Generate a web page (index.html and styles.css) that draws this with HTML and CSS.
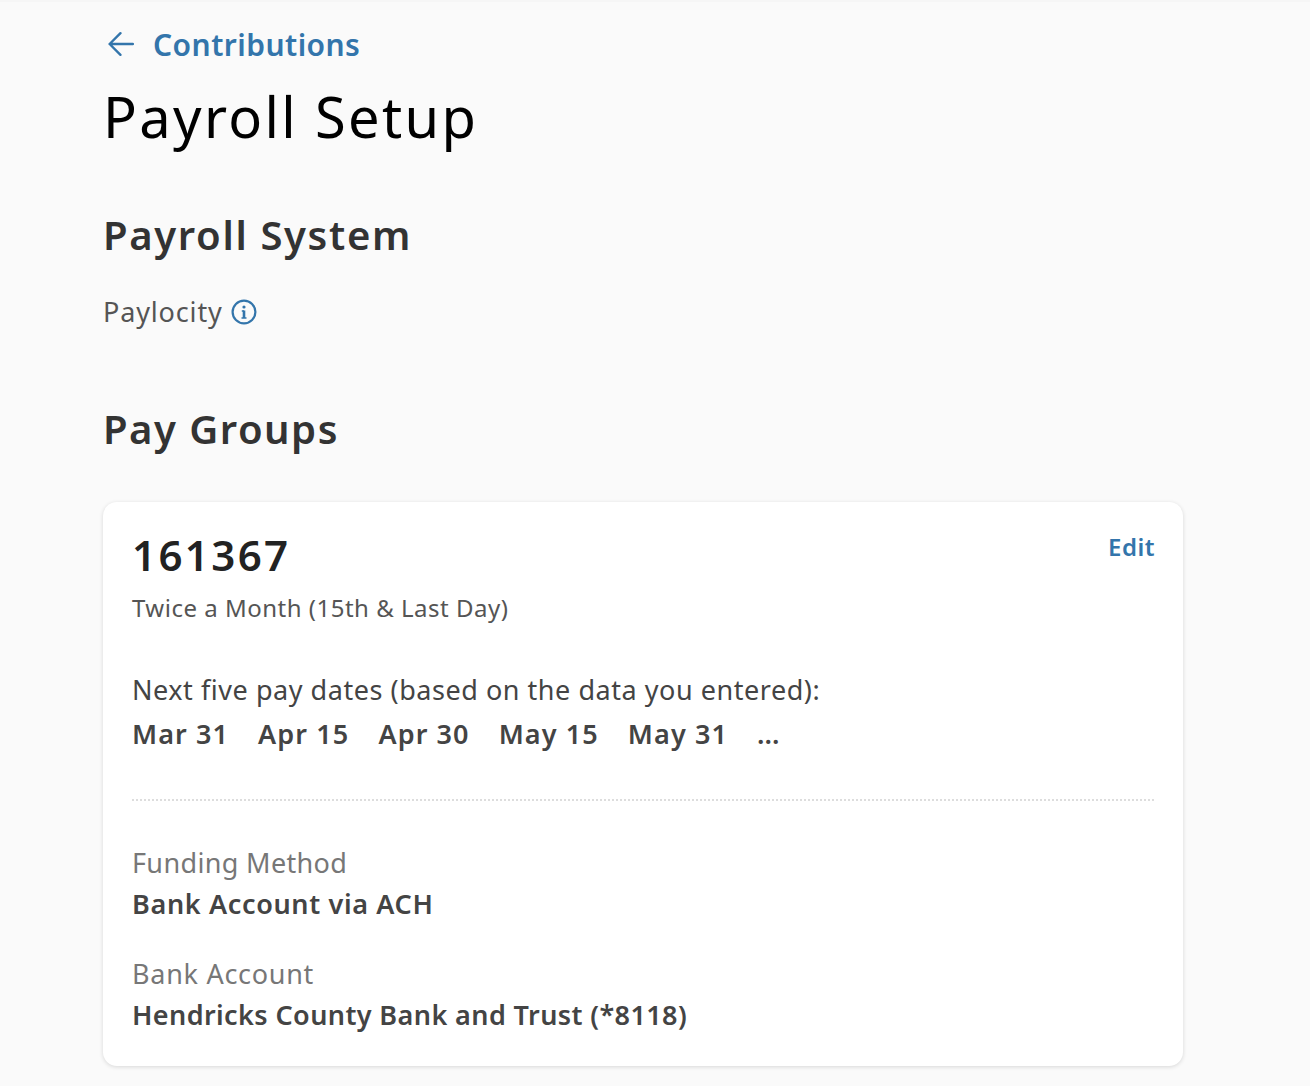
FILE: index.html
```html
<!DOCTYPE html>
<html lang="en">
<head>
    <meta charset="UTF-8">
    <meta name="viewport" content="width=device-width, initial-scale=1.0">
    <title>Payroll Setup</title>
    <link rel="stylesheet" href="styles.css">
</head>
<body>
    <div class="page">
        <a class="back-link" href="#">
            <svg class="back-icon" viewBox="0 0 24 24" width="24" height="24" fill="none" stroke="currentColor" stroke-width="2.2" stroke-linecap="round" stroke-linejoin="round">
                <path d="M23 12H1.5M11.5 2 1.5 12l10 10"/>
            </svg>
            <span>Contributions</span>
        </a>
        <h1 class="page-title">Payroll Setup</h1>

        <h2 class="section-title system-title">Payroll System</h2>
        <div class="system-name">
            <span>Paylocity</span>
            <svg class="info-icon" viewBox="0 0 26 26" width="26" height="26" fill="none">
                <circle cx="13" cy="13" r="11.4" stroke="currentColor" stroke-width="2.2"/>
                <circle cx="13" cy="8" r="1.6" fill="currentColor"/>
                <path d="M13 11.5v7.5" stroke="currentColor" stroke-width="2.6"/>
                <path d="M10.8 12h2.2M10.5 19h5" stroke="currentColor" stroke-width="1.4"/>
            </svg>
        </div>

        <h2 class="section-title groups-title">Pay Groups</h2>

        <div class="card">
            <div class="card-head">
                <div class="group-id">161367</div>
                <a class="edit-link" href="#">Edit</a>
            </div>
            <div class="group-schedule">Twice a Month (15th &amp; Last Day)</div>

            <div class="dates-label">Next five pay dates (based on the data you entered):</div>
            <div class="dates">
                <span>Mar 31</span>
                <span>Apr 15</span>
                <span>Apr 30</span>
                <span>May 15</span>
                <span>May 31</span>
                <span class="dates-more">...</span>
            </div>

            <div class="divider"></div>

            <div class="field">
                <div class="field-label">Funding Method</div>
                <div class="field-value">Bank Account via ACH</div>
            </div>
            <div class="field">
                <div class="field-label bank-label">Bank Account</div>
                <div class="field-value bank-value">Hendricks County Bank and Trust (*8118)</div>
            </div>
        </div>
    </div>
</body>
</html>
```

FILE: styles.css
```css
* { margin: 0; padding: 0; box-sizing: border-box; }
body {
    font-family: "Noto Sans", "Lato", sans-serif;
    background: #fafafa;
    color: #333;
    min-height: 100vh;
    overflow: hidden;
}
.page {
    padding: 23px 127px 0 103px;
    border-top: 2px solid #f6f6f6;
}
.back-link {
    display: flex;
    align-items: center;
    gap: 19px;
    height: 38px;
    padding-left: 5px;
    color: #3375ab;
    font-size: 30px;
    font-weight: 600;
    letter-spacing: 0.45px;
    text-decoration: none;
}
.back-icon {
    width: 26px;
    height: 26px;
    flex-shrink: 0;
}
.page-title {
    margin-top: 18px;
    color: #000;
    font-size: 56px;
    font-weight: 400;
    line-height: 70px;
    letter-spacing: 2.35px;
}
.section-title {
    margin-top: 58px;
    color: #333;
    font-size: 40px;
    font-weight: 600;
    line-height: 52px;
}
.system-title { letter-spacing: 1.65px; }
.system-name {
    display: flex;
    align-items: center;
    gap: 8px;
    margin-top: 32px;
    color: #555;
    font-size: 27px;
    line-height: 38px;
    letter-spacing: 0.85px;
}
.info-icon { color: #3375ab; }
.groups-title {
    margin-top: 72px;
    letter-spacing: 1.5px;
}
.card {
    margin-top: 47px;
    padding: 29px 28px 32px 29px;
    background: #fff;
    border-radius: 14px;
    box-shadow: 0 1px 4px rgba(0, 0, 0, 0.14);
}
.card-head {
    display: flex;
    justify-content: space-between;
    align-items: flex-start;
}
.group-id {
    color: #222;
    font-size: 42px;
    font-weight: 600;
    line-height: 48px;
    letter-spacing: 2.4px;
}
.edit-link {
    margin-top: -1px;
    color: #3375ab;
    font-size: 24px;
    font-weight: 600;
    letter-spacing: 0.5px;
    text-decoration: none;
}
.group-schedule {
    margin-top: 12px;
    color: #555;
    font-size: 24px;
    line-height: 34px;
    letter-spacing: 0.5px;
}
.dates-label {
    margin-top: 47px;
    color: #444;
    font-size: 27px;
    line-height: 36px;
    letter-spacing: 0.54px;
}
.dates {
    display: flex;
    gap: 29px;
    margin-top: 8px;
    color: #444;
    font-size: 27px;
    font-weight: 600;
    line-height: 36px;
    letter-spacing: 1.1px;
}
.dates-more { letter-spacing: 0; }
.divider {
    margin: 47px 1px 0 0;
    border-top: 2px dotted #ddd;
}
.field { margin-top: 32px; }
.divider + .field { margin-top: 43px; }
.field-label {
    color: #777;
    font-size: 27px;
    line-height: 38px;
    letter-spacing: 0.35px;
}
.field-value {
    margin-top: 3px;
    color: #444;
    font-size: 27px;
    font-weight: 600;
    line-height: 38px;
    letter-spacing: 0.65px;
}
.bank-label { letter-spacing: 0.72px; }
.bank-value { letter-spacing: 0.4px; }
```
